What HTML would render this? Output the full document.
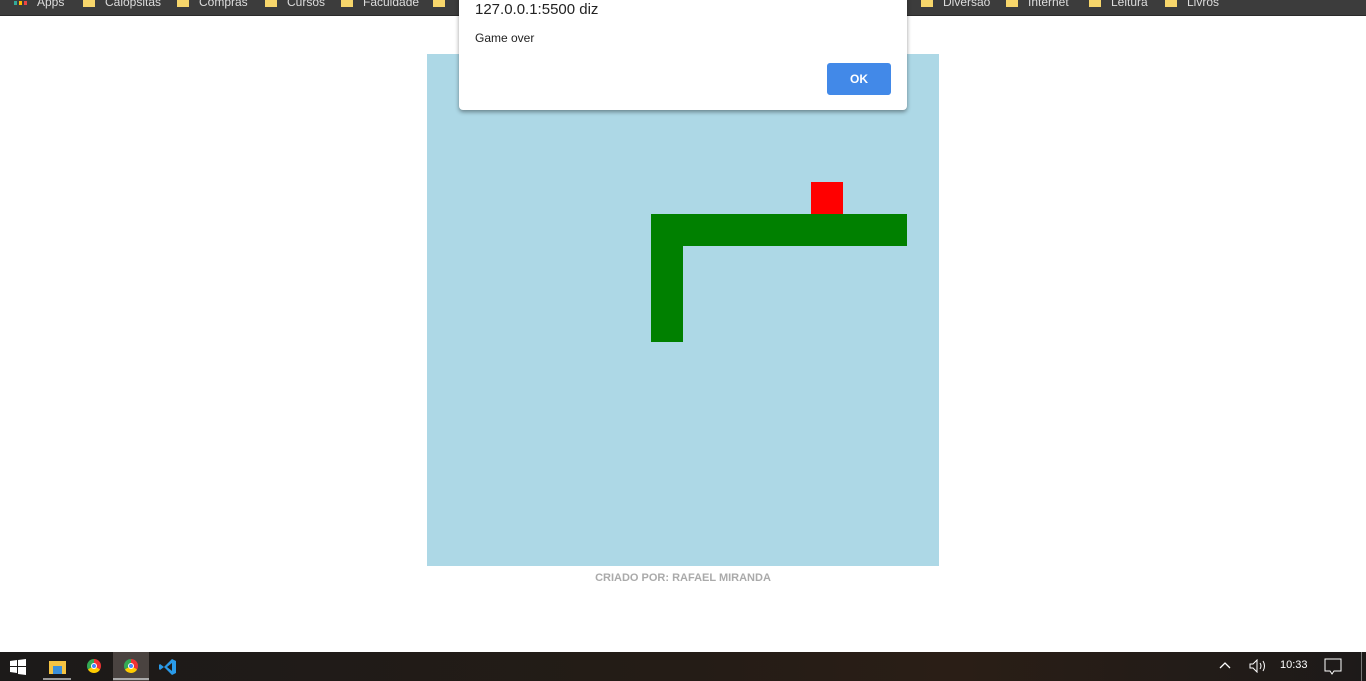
<!DOCTYPE html>
<html><head><style>
*{margin:0;padding:0;box-sizing:border-box}
body{width:1366px;height:681px;overflow:hidden;background:#fff;position:relative;font-family:"Liberation Sans",sans-serif}
.a{position:absolute}
.bm{color:#ddd;font-size:12px;top:-5px}
.f{width:12px;height:9px;background:#f7d66b;top:-2px}
</style></head><body>
<div class="a" style="left:0;top:0;width:1366px;height:16px;background:#3c3c3c;border-bottom:1px solid #2a2a2a"></div>
<div class="a" style="left:14px;top:1px;width:3px;height:4px;background:#3a9"></div>
<div class="a" style="left:19px;top:1px;width:3px;height:4px;background:#fb0"></div>
<div class="a" style="left:24px;top:1px;width:3px;height:4px;background:#e44"></div>
<div class="a bm" style="left:37px">Apps</div>
<div class="a f" style="left:83px"></div><div class="a bm" style="left:105px">Calopsitas</div>
<div class="a f" style="left:177px"></div><div class="a bm" style="left:199px">Compras</div>
<div class="a f" style="left:265px"></div><div class="a bm" style="left:287px">Cursos</div>
<div class="a f" style="left:341px"></div><div class="a bm" style="left:363px">Faculdade</div>
<div class="a f" style="left:433px"></div>
<div class="a f" style="left:921px"></div><div class="a bm" style="left:943px">Diversão</div>
<div class="a f" style="left:1006px"></div><div class="a bm" style="left:1028px">Internet</div>
<div class="a f" style="left:1089px"></div><div class="a bm" style="left:1111px">Leitura</div>
<div class="a f" style="left:1165px"></div><div class="a bm" style="left:1187px">Livros</div>

<div class="a" style="left:427px;top:54px;width:512px;height:512px;background:#add8e6"></div>
<div class="a" style="left:811px;top:182px;width:32px;height:32px;background:#f00"></div>
<div class="a" style="left:651px;top:214px;width:256px;height:32px;background:#008000"></div>
<div class="a" style="left:651px;top:246px;width:32px;height:96px;background:#008000"></div>
<div class="a" style="left:427px;top:572px;width:512px;text-align:center;font-size:11px;font-weight:bold;color:#aaa">CRIADO POR: RAFAEL MIRANDA</div>

<div class="a" style="left:459px;top:-6px;width:448px;height:116px;background:#fff;border-radius:4px;box-shadow:0 2px 4px rgba(0,0,0,.4)"></div>
<div class="a" style="left:475px;top:1px;font-size:15px;color:#222">127.0.0.1:5500 diz</div>
<div class="a" style="left:475px;top:31px;font-size:12px;color:#222">Game over</div>
<div class="a" style="left:827px;top:63px;width:64px;height:32px;background:#4289e8;border-radius:3px;color:#fff;font-size:12px;font-weight:bold;text-align:center;line-height:32px">OK</div>

<div class="a" style="left:0;top:652px;width:1366px;height:29px;background:linear-gradient(90deg,#1c1a19,#241c16 50%,#2a1e16 70%,#1d1a19)"></div>
<svg class="a" style="left:10px;top:659px" width="16" height="16"><path d="M0 2l7-1v6H0zM8 1l8-1v7H8zM0 8h7v6l-7-1zM8 8h8v8l-8-1z" fill="#fff"/></svg>
<div class="a" style="left:49px;top:661px;width:17px;height:13px;background:#f5c342"></div>
<div class="a" style="left:53px;top:666px;width:9px;height:8px;background:#3b8fd9"></div>
<div class="a" style="left:43px;top:678px;width:28px;height:2px;background:#999"></div>
<div class="a" style="left:113px;top:652px;width:36px;height:29px;background:#4a4340"></div>
<div class="a" style="left:113px;top:678px;width:36px;height:2px;background:#aaa"></div>
<div class="a" style="left:87px;top:659px;width:14px;height:14px;border-radius:50%;background:conic-gradient(#e33 0 120deg,#fc0 120deg 240deg,#3a5 240deg);"></div>
<div class="a" style="left:91px;top:663px;width:6px;height:6px;border-radius:50%;background:#48f;border:1px solid #fff"></div>
<div class="a" style="left:124px;top:659px;width:14px;height:14px;border-radius:50%;background:conic-gradient(#e33 0 120deg,#fc0 120deg 240deg,#3a5 240deg);"></div>
<div class="a" style="left:128px;top:663px;width:6px;height:6px;border-radius:50%;background:#48f;border:1px solid #fff"></div>
<svg class="a" style="left:159px;top:658px" width="18" height="18"><path d="M13 1L5 9 1 6 0 7v4l1 1 4-3 8 8 4-2V3zM13 5v8L8 9z" fill="#2a9ae8"/></svg>
<svg class="a" style="left:1219px;top:661px" width="12" height="8"><path d="M1 7l5-5 5 5" stroke="#fff" fill="none" stroke-width="1.3"/></svg>
<svg class="a" style="left:1249px;top:659px" width="18" height="14"><path d="M1 5h3l4-4v12l-4-4H1z" stroke="#fff" fill="none"/><path d="M11 4q2 3 0 6M14 2q3 5 0 10" stroke="#fff" fill="none"/></svg>
<div class="a" style="left:1280px;top:659px;color:#fff;font-size:11px">10:33</div>
<svg class="a" style="left:1324px;top:658px" width="18" height="17"><path d="M1 1h16v12H10l-2 3-2-3H1z" stroke="#fff" fill="none"/></svg>
<div class="a" style="left:1361px;top:652px;width:1px;height:29px;background:#777"></div>
</body></html>
